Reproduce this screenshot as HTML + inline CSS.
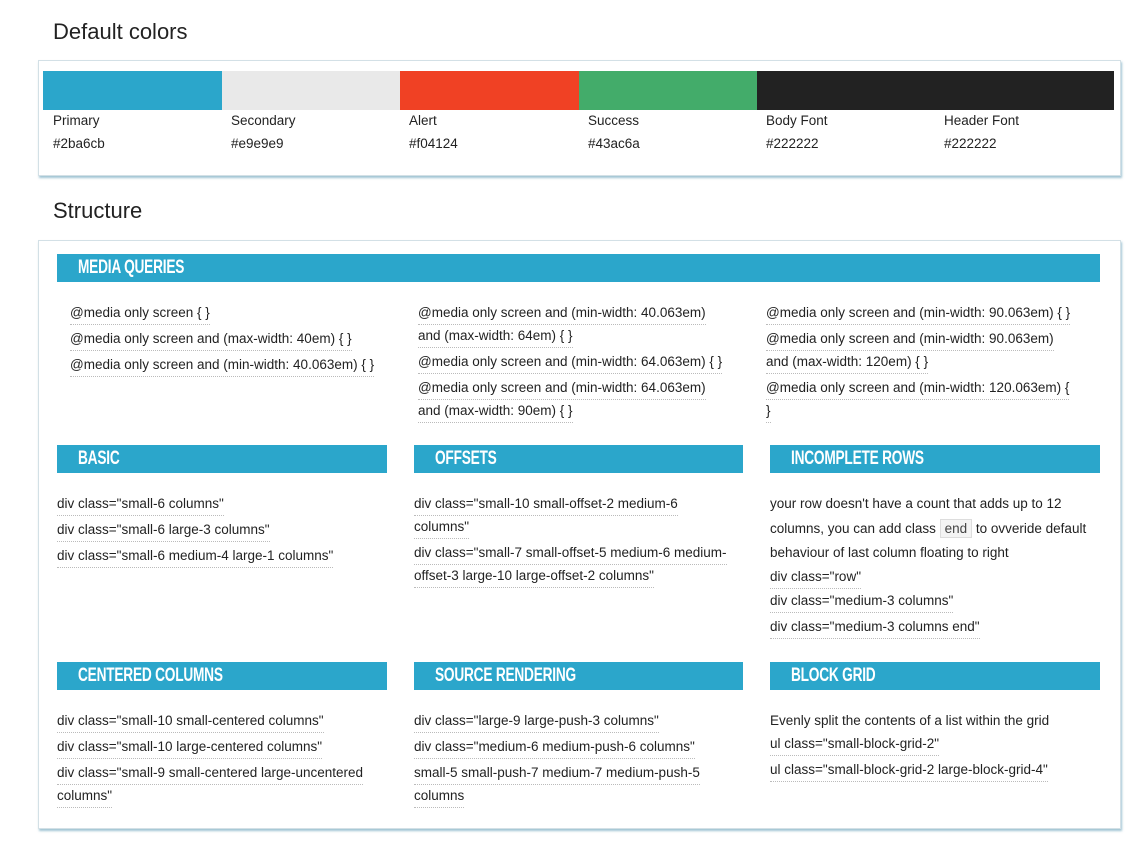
<!DOCTYPE html>
<html><head><meta charset="utf-8"><style>
body{margin:0;width:1141px;height:846px;background:#fff;font-family:"Liberation Sans",sans-serif;color:#222;position:relative;overflow:hidden}
h2{position:absolute;margin:0;font-weight:normal;font-size:22px;left:53px}
.card{position:absolute;left:38px;width:1081px;background:#fff;border:1px solid #d3e0e6;box-shadow:1px 2px 2px rgba(70,140,170,.5)}
.sw{position:absolute;top:71px;height:39px}
.lab{position:absolute;font-size:13.5px}
.bar{position:absolute;height:28px;background:#2ba6cb;color:#fff;font-weight:bold;font-size:19px;line-height:28px;}
.bar span{display:inline-block;transform:scaleX(.72);transform-origin:left;margin-left:21px;letter-spacing:-.3px}
.t{position:absolute;font-size:13.5px;line-height:16px;white-space:nowrap;border-bottom:1px dotted #bbb;padding-bottom:3px}
.p{position:absolute;font-size:13.5px;line-height:16px;white-space:nowrap}
code{font-family:"Liberation Sans",sans-serif;background:#f4f4f4;border:1px solid #ddd;padding:1px 4px;color:#444}
</style></head><body>
<h2 style="top:19px">Default colors</h2>
<div class="card" style="top:60px;height:114px"></div>
<div class="sw" style="left:43px;width:179px;background:#2ba6cb"></div>
<div class="sw" style="left:222px;width:178px;background:#e9e9e9"></div>
<div class="sw" style="left:400px;width:179px;background:#f04124"></div>
<div class="sw" style="left:579px;width:178px;background:#43ac6a"></div>
<div class="sw" style="left:757px;width:357px;background:#222"></div>
<div class="lab" style="left:53px;top:113px">Primary</div><div class="lab" style="left:53px;top:136px">#2ba6cb</div>
<div class="lab" style="left:231px;top:113px">Secondary</div><div class="lab" style="left:231px;top:136px">#e9e9e9</div>
<div class="lab" style="left:409px;top:113px">Alert</div><div class="lab" style="left:409px;top:136px">#f04124</div>
<div class="lab" style="left:588px;top:113px">Success</div><div class="lab" style="left:588px;top:136px">#43ac6a</div>
<div class="lab" style="left:766px;top:113px">Body Font</div><div class="lab" style="left:766px;top:136px">#222222</div>
<div class="lab" style="left:944px;top:113px">Header Font</div><div class="lab" style="left:944px;top:136px">#222222</div>

<h2 style="top:198px">Structure</h2>
<div class="card" style="top:240px;height:587px"></div>
<div class="bar" style="left:57px;top:254px;width:1043px"><span>MEDIA QUERIES</span></div>
<div class="t" style="left:70px;top:305px">@media only screen { }</div>
<div class="t" style="left:70px;top:331px">@media only screen and (max-width: 40em) { }</div>
<div class="t" style="left:70px;top:357px">@media only screen and (min-width: 40.063em) { }</div>
<div class="t" style="left:418px;top:305px">@media only screen and (min-width: 40.063em)</div>
<div class="t" style="left:418px;top:328px">and (max-width: 64em) { }</div>
<div class="t" style="left:418px;top:354px">@media only screen and (min-width: 64.063em) { }</div>
<div class="t" style="left:418px;top:380px">@media only screen and (min-width: 64.063em)</div>
<div class="t" style="left:418px;top:403px">and (max-width: 90em) { }</div>
<div class="t" style="left:766px;top:305px">@media only screen and (min-width: 90.063em) { }</div>
<div class="t" style="left:766px;top:331px">@media only screen and (min-width: 90.063em)</div>
<div class="t" style="left:766px;top:354px">and (max-width: 120em) { }</div>
<div class="t" style="left:766px;top:380px">@media only screen and (min-width: 120.063em) {</div>
<div class="t" style="left:766px;top:403px">}</div>

<div class="bar" style="left:57px;top:445px;width:330px"><span>BASIC</span></div>
<div class="bar" style="left:414px;top:445px;width:329px"><span>OFFSETS</span></div>
<div class="bar" style="left:770px;top:445px;width:330px"><span>INCOMPLETE ROWS</span></div>
<div class="t" style="left:57px;top:496px">div class="small-6 columns"</div>
<div class="t" style="left:57px;top:522px">div class="small-6 large-3 columns"</div>
<div class="t" style="left:57px;top:548px">div class="small-6 medium-4 large-1 columns"</div>
<div class="t" style="left:414px;top:496px">div class="small-10 small-offset-2 medium-6</div>
<div class="t" style="left:414px;top:519px">columns"</div>
<div class="t" style="left:414px;top:545px">div class="small-7 small-offset-5 medium-6 medium-</div>
<div class="t" style="left:414px;top:568px">offset-3 large-10 large-offset-2 columns"</div>
<div class="p" style="left:770px;top:496px">your row doesn't have a count that adds up to 12</div>
<div class="p" style="left:770px;top:521px">columns, you can add class <code>end</code> to ovveride default</div>
<div class="p" style="left:770px;top:545px">behaviour of last column floating to right</div>
<div class="t" style="left:770px;top:569px">div class="row"</div>
<div class="t" style="left:770px;top:593px">div class="medium-3 columns"</div>
<div class="t" style="left:770px;top:619px">div class="medium-3 columns end"</div>

<div class="bar" style="left:57px;top:662px;width:330px"><span>CENTERED COLUMNS</span></div>
<div class="bar" style="left:414px;top:662px;width:329px"><span>SOURCE RENDERING</span></div>
<div class="bar" style="left:770px;top:662px;width:330px"><span>BLOCK GRID</span></div>
<div class="t" style="left:57px;top:713px">div class="small-10 small-centered columns"</div>
<div class="t" style="left:57px;top:739px">div class="small-10 large-centered columns"</div>
<div class="t" style="left:57px;top:765px">div class="small-9 small-centered large-uncentered</div>
<div class="t" style="left:57px;top:788px">columns"</div>
<div class="t" style="left:414px;top:713px">div class="large-9 large-push-3 columns"</div>
<div class="t" style="left:414px;top:739px">div class="medium-6 medium-push-6 columns"</div>
<div class="t" style="left:414px;top:765px">small-5 small-push-7 medium-7 medium-push-5</div>
<div class="t" style="left:414px;top:788px">columns</div>
<div class="p" style="left:770px;top:713px">Evenly split the contents of a list within the grid</div>
<div class="t" style="left:770px;top:736px">ul class="small-block-grid-2"</div>
<div class="t" style="left:770px;top:762px">ul class="small-block-grid-2 large-block-grid-4"</div>
</body></html>
